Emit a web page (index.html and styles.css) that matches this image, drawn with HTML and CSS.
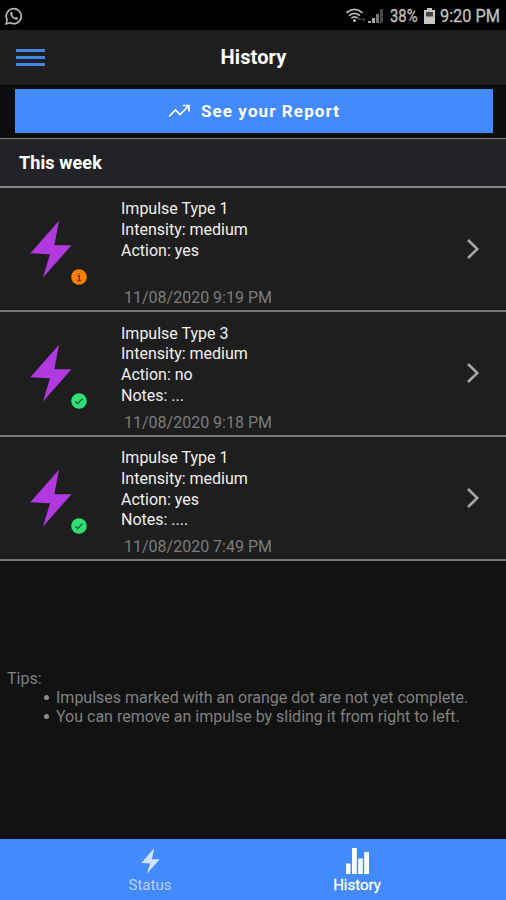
FILE: index.html
```html
<!DOCTYPE html>
<html lang="en">
<head>
<meta charset="utf-8">
<title>History</title>
<link rel="stylesheet" href="styles.css">
</head>
<body>
<svg width="0" height="0" class="defs">
  <symbol id="bolt" viewBox="0 0 42 58"><path d="M29 .7.3 33.3 20 34.3 13 57.5 41.5 25.3H24.3Z"/></symbol>
  <symbol id="check" viewBox="0 0 16 16"><circle cx="8" cy="8" r="7.8" fill="#2fdf75"/><path d="m4.3 8.4 2.3 2.2 5-5" fill="none" stroke="#14572f" stroke-width="1.3"/></symbol>
  <symbol id="info" viewBox="0 0 16 16"><circle cx="8" cy="8" r="7.8" fill="#ff7f0a"/><path d="M6.5 6.8H8.3V11.2M6.2 11.5H10M7.9 4V5.3" fill="none" stroke="#7a3b00" stroke-width="1.4"/></symbol>
  <symbol id="chevron" viewBox="0 0 14 22"><path d="m2 2 9.3 9L2 20" fill="none" stroke="#a5a5a5" stroke-width="2.6"/></symbol>
</svg>
<div class="statusbar">
  <svg class="whatsapp" viewBox="0 0 18 18"><path d="M1.2 16.8 2.1 12.7A7.5 7.5 0 1 1 5.2 15.8Z" fill="none" stroke="#b5b5b5" stroke-width="1.7"/><path d="M6.5 4.6 5.3 5.6C4.5 8.7 8.5 12.9 12 12.7L13.3 11.3 11.1 9.9 10 10.8C8.7 10.2 7.8 9.2 7.3 8L8 7Z" fill="#b5b5b5"/></svg>
  <svg class="wifi" viewBox="0 0 21 16"><g fill="none" stroke="#bdbdbd" stroke-width="1.7"><path d="M.5 4.800Q8.500-1.900 16.500 4.800M3 7.700Q8.500 3 14 7.700M5.300 10.200Q8.500 7.500 11.700 10.200"/></g><circle cx="8.500" cy="12.500" r="1.500" fill="#bdbdbd"/><path d="m11.500 12 2-2.500 2 2.500ZM15.500 10.500h4l-2 3Z" fill="#4b4b4b"/></svg>
  <svg class="signal" viewBox="0 0 15 16"><path d="M0 13h3v2H0ZM4 10h3v5H4Z" fill="#a8a8a8"/><path d="M8 6h3v9H8Z" fill="#777"/><path d="M12 1h3v14h-3Z" fill="#484848"/></svg>
  <span class="percent">38%</span>
  <svg class="battery" viewBox="0 0 11 16"><path d="M3 0h5v2h3v14H0V2h3Z" fill="#c6c6c6"/><path d="M2 4h7v4.500H2Z" fill="#444"/></svg>
  <span class="clock">9:20 PM</span>
</div>
<header class="header">
  <div class="menu"><i></i><i></i><i></i></div>
  <h1>History</h1>
</header>
<div class="report">
  <button><svg viewBox="0 0 22 14"><path d="M1 12.500 7.500 6 12 10.500 20.500 2M15 1.500H21V7.500" fill="none" stroke="#fff" stroke-width="1.700"/></svg><span>See your Report</span></button>
</div>
<h2 class="week">This week</h2>
<main class="list">
  <section class="row">
    <div class="icon"><svg class="bolt"><use href="#bolt"/></svg><svg class="badge"><use href="#info"/></svg></div>
    <div class="details"><p>Impulse Type 1<br>Intensity: medium<br>Action: yes</p><time>11/08/2020 9:19 PM</time></div>
    <svg class="chevron"><use href="#chevron"/></svg>
  </section>
  <section class="row">
    <div class="icon"><svg class="bolt"><use href="#bolt"/></svg><svg class="badge"><use href="#check"/></svg></div>
    <div class="details"><p>Impulse Type 3<br>Intensity: medium<br>Action: no<br>Notes: ...</p><time>11/08/2020 9:18 PM</time></div>
    <svg class="chevron"><use href="#chevron"/></svg>
  </section>
  <section class="row">
    <div class="icon"><svg class="bolt"><use href="#bolt"/></svg><svg class="badge"><use href="#check"/></svg></div>
    <div class="details"><p>Impulse Type 1<br>Intensity: medium<br>Action: yes<br>Notes: ....</p><time>11/08/2020 7:49 PM</time></div>
    <svg class="chevron"><use href="#chevron"/></svg>
  </section>
</main>
<div class="tips">Tips:
  <ul><li>Impulses marked with an orange dot are not yet complete.</li><li>You can remove an impulse by sliding it from right to left.</li></ul>
</div>
<nav class="tabs">
  <div class="tab"><svg class="tab-bolt"><use href="#bolt"/></svg><span>Status</span></div>
  <div class="tab active"><svg class="bars" viewBox="0 0 23 26"><path d="M0 15.500h4.500V26H0ZM6 0h4.800v26H6ZM12.200 10.500h4.600V26h-4.600ZM18.200 4H23v22h-4.800Z" fill="#fff"/></svg><span>History</span></div>
</nav>
</body>
</html>
```

FILE: styles.css
```css
* { box-sizing: border-box; }
body {
  margin: 0;
  width: 506px;
  height: 900px;
  overflow: hidden;
  display: flex;
  flex-direction: column;
  background: #121212;
  color: #f0f0f0;
  font-family: Roboto, sans-serif;
  font-size: 16px;
}
.defs { position: absolute; }
h1, h2, p { margin: 0; }
svg { display: block; flex: none; }
.statusbar {
  height: 30px;
  flex: none;
  display: flex;
  align-items: center;
  padding: 1px 6px 0 5px;
  background: #000;
  color: #c2c2c2;
  font-size: 18.5px;
}
.whatsapp { width: 18px; height: 18px; margin-right: auto; }
.wifi { width: 21px; height: 16px; }
.signal { width: 15px; height: 16px; margin: 0 7px 0 1px; }
.battery { width: 11px; height: 16px; margin-right: 5px; }
.percent, .clock { white-space: nowrap; transform-origin: 0 50%; -webkit-text-stroke: .3px; }
.percent { width: 34px; transform: scaleX(.8); }
.clock { width: 60px; transform: scaleX(.88); }
.header {
  height: 55px;
  flex: none;
  display: grid;
  grid-template-columns: 60px 1fr 60px;
  align-items: center;
  background: #1f1f1f;
}
.menu { display: flex; flex-direction: column; gap: 4px; padding-left: 16px; }
.menu i { width: 29px; height: 3px; background: #4585e4; }
h1 { text-align: center; font-size: 20px; font-weight: 700; color: #fff; padding-left: 1px; line-height: 22px; margin-top: -1px; letter-spacing: .1px; }
.report { height: 53px; flex: none; padding: 4px 13px 5px 15px; background: #0d0d0d; }
button {
  width: 100%;
  height: 44px;
  border: 0;
  padding: 0;
  display: flex;
  align-items: center;
  justify-content: center;
  gap: 11px;
  background: #448aff;
  color: #fff;
  font: 700 17px Roboto, sans-serif;
  letter-spacing: 1.1px;
}
button svg { width: 22px; height: 14px; }
.week {
  height: 50px;
  flex: none;
  border-top: 1.5px solid #858585;
  border-bottom: 2px solid #858585;
  background: #222326;
  padding-left: 19px;
  line-height: 48px;
  font-size: 18px;
  font-weight: 700;
  letter-spacing: .1px;
  color: #fff;
}
.row {
  height: 124.3px;
  display: flex;
  border-bottom: 2px solid #777;
  background: #1e1e1e;
}
.icon { width: 121px; padding: 32px 0 0 30px; position: relative; }
.bolt { width: 42px; height: 58px; fill: #b03ae0; }
.badge { position: absolute; left: 71px; top: 81px; width: 16px; height: 16px; }
.details { width: 345px; padding-top: 11.4px; display: flex; flex-direction: column; }
.details p { height: 89px; line-height: 20.8px; }
.details time { line-height: 20px; padding-left: 3px; color: #7c7c7c; }
.chevron { width: 14px; height: 22px; margin-top: 50px; }
.tips { margin: 108px 0 auto 7px; line-height: 19px; color: #808080; }
.tips ul { margin: 0; padding-left: 37px; list-style: none; }
.tips li { display: flex; align-items: center; gap: 7px; }
.tips li::before { content: ""; width: 5px; height: 5px; border-radius: 50%; background: #8c8c8c; }
.tabs {
  height: 61px;
  flex: none;
  display: flex;
  justify-content: center;
  background: #448aff;
}
.tab {
  width: 207px;
  display: flex;
  flex-direction: column;
  align-items: center;
  color: #b6d1ff;
  font-size: 15px;
  line-height: 18px;
  padding: 9px 0 0 1px;
}
.tab svg { height: 26px; margin-bottom: 2px; }
.tab-bolt { width: 19px; fill: #d2e3ff; }
.bars { width: 23px; }
.active { color: #fff; }
.active span { -webkit-text-stroke: .3px; }
```
